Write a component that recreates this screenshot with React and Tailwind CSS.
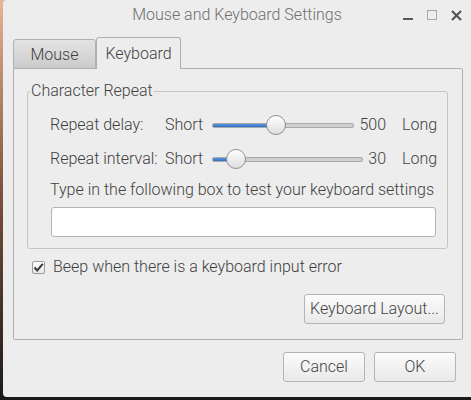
import { useState } from 'react'

const font = { fontFamily: 'Roboto, "Noto Sans", "Liberation Sans", sans-serif' }

// Slider row component
function Slider({ fraction }) {
  return (
    <div className="relative flex-1 h-[20px] flex items-center">
      <div className="w-full h-[5px] rounded-[2px] border border-[#a9a9a9] bg-[#cfcfcf] overflow-hidden">
        <div className="h-full bg-gradient-to-b from-[#5b95de] to-[#2f6fc4]" style={{ width: `${fraction * 100}%` }} />
      </div>
      <div
        className="absolute top-1/2 -translate-y-1/2 -translate-x-1/2 w-[20px] h-[20px] rounded-full border border-[#8f8f8f] bg-gradient-to-b from-[#ffffff] to-[#dedede]"
        style={{ left: `calc(10px + (100% - 20px) * ${fraction})` }}
      />
    </div>
  )
}

function RepeatRow({ label, value, fraction }) {
  return (
    <div className="flex items-center h-[34px] whitespace-nowrap">
      <span className="w-[115px]">{label}</span>
      <span className="w-[47px]">Short</span>
      <Slider fraction={fraction} />
      <span className="ml-[5px]">{value}</span>
      <span className="w-[51px] pl-[16px]">Long</span>
    </div>
  )
}

function Button({ children, className }) {
  return (
    <button className={`h-[30px] rounded-[3px] border border-[#b4b4b4] bg-gradient-to-b from-[#fbfbfb] to-[#e9e9e9] text-[#444] text-[16px] font-light ${className}`}>
      {children}
    </button>
  )
}

export default function App() {
  const [beep, setBeep] = useState(true)

  return (
    <div className="w-[471px] h-[400px] overflow-hidden bg-gradient-to-b from-[#e8b596] via-[#7a4f38] to-[#1b1a1a] flex" style={font}>
      <div className="ml-[3px] w-[468px] h-[397px] bg-[#ededed] rounded-l-[4px] flex flex-col text-[16px] font-light text-[#3f3f3f]">
        {/* Title bar */}
        <div className="h-[30px] grid grid-cols-[1fr_auto_1fr] items-center">
          <div />
          <div className="text-[#6f6f6f]">Mouse and Keyboard Settings</div>
          <div className="flex items-center justify-end gap-[13px] pr-[9px]">
            <svg width="11" height="11" viewBox="0 0 11 11"><rect x="0" y="8" width="10" height="2" fill="#5a5a5a" /></svg>
            <svg width="11" height="11" viewBox="0 0 11 11"><rect x="0.5" y="0.5" width="9" height="9" fill="none" stroke="#a8a8a8" /></svg>
            <svg width="11" height="11" viewBox="0 0 11 11"><path d="M1 1 L10 10 M10 1 L1 10" stroke="#555" strokeWidth="2.2" /></svg>
          </div>
        </div>

        {/* Tabs */}
        <div className="mt-[7px] h-[32px] pl-[10px] flex items-end relative z-10">
          <div className="w-[83px] h-[30px] border border-[#b0b0b0] rounded-t-[3px] bg-gradient-to-b from-[#e4e4e4] to-[#cbcbcb] flex items-center justify-center pt-[2px]">
            Mouse
          </div>
          <div className="w-[85px] h-[32px] border border-b-0 border-[#b0b0b0] rounded-t-[3px] bg-[#ededed] flex items-center justify-center">
            Keyboard
          </div>
        </div>

        {/* Notebook page */}
        <div className="-mt-px ml-[10px] w-[450px] h-[272px] border border-[#b0b0b0] rounded-[2px] pt-[13px] pl-[13px] pr-[14px] flex flex-col">
          <fieldset className="border border-[#c4c4c4] rounded-[3px]">
            <legend className="ml-[2px] px-[1px] leading-[18px]">Character Repeat</legend>
            <div className="pl-[22px] pr-[10px] pb-[11px]">
              <div className="mt-[8px]">
                <RepeatRow label="Repeat delay:" value="500" fraction={0.444} />
                <RepeatRow label="Repeat interval:" value="30" fraction={0.109} />
              </div>
              <div className="mt-[4px] h-[20px] leading-[20px] whitespace-nowrap">
                Type in the following box to test your keyboard settings
              </div>
              <input
                className="mt-[7px] ml-px w-[385px] h-[30px] block bg-white border border-[#b4b4b4] rounded-[3px] outline-none px-2"
                type="text"
              />
            </div>
          </fieldset>

          <label className="mt-[8px] h-[20px] pl-[5px] flex items-center gap-[8px]">
            <span className="w-[13px] h-[13px] border border-[#9c9c9c] rounded-[2px] bg-gradient-to-b from-white to-[#e6e6e6] flex items-center justify-center" onClick={() => setBeep(!beep)}>
              {beep && (
                <svg width="11" height="11" viewBox="0 0 11 11"><path d="M1.5 5.5 L4.2 8.5 L9.8 1.8" fill="none" stroke="#3a3a3a" strokeWidth="2" /></svg>
              )}
            </span>
            <span>Beep when there is a keyboard input error</span>
          </label>

          <div className="mt-[17px] flex justify-end pr-[3px]">
            <Button className="w-[141px]">Keyboard Layout...</Button>
          </div>
        </div>

        {/* Dialog buttons */}
        <div className="mt-[12px] flex justify-end gap-[9px] pr-[15px]">
          <Button className="w-[82px]">Cancel</Button>
          <Button className="w-[82px]">OK</Button>
        </div>
      </div>
    </div>
  )
}
